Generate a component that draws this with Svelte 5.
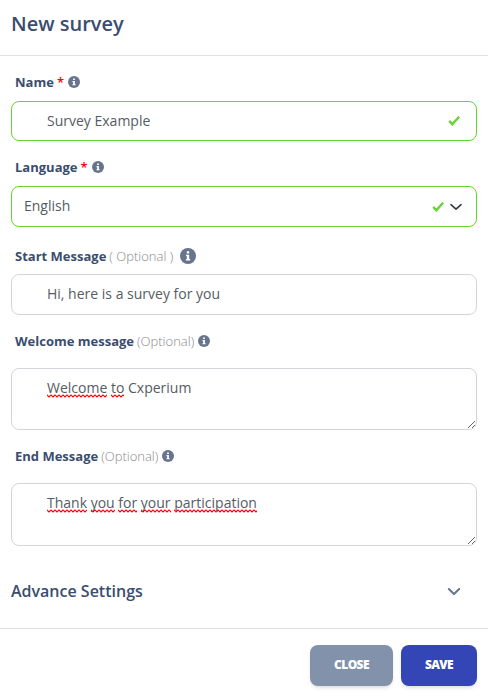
<script>
	let name = "Survey Example";
	let language = "English";
	let startMessage = "Hi, here is a survey for you";
	
	// words flagged by the spell checker are underlined
	let welcomeWords = [
		{text: "Welcome", flagged: true},
		{text: "to", flagged: true},
		{text: "Cxperium", flagged: false},
	];
	let endWords = ["Thank", "you", "for", "your", "participation"].map(
		text => ({text, flagged: true})
	);
	
	let advanced = false;
</script>

{#snippet info(size)}
	<svg class="info" width={size} height={size} viewBox="0 0 16 16">
		<circle cx="8" cy="8" r="8" />
		<path d="M6.8 3.2h2.4v2.2H6.8zM6 6.7h3.2v4.2h1v1.5H5.9v-1.5h1V8.2H6z" />
	</svg>
{/snippet}

{#snippet check()}
	<svg class="check" width="12" height="10" viewBox="0 0 12 10">
		<path d="M1.2 4.9L4.3 8.3L11.2 .7" />
	</svg>
{/snippet}

{#snippet words(list)}
	{#each list as word, i}{i > 0 ? " " : ""}<span class:flagged={word.flagged}>{word.text}</span>{/each}
{/snippet}

<div class="modal">
	<header>
		<h1>New survey</h1>
	</header>
	<main>
		<div class="label name">
			<b>Name</b><span class="required">*</span>{@render info(12)}
		</div>
		<div class="box valid">
			<input bind:value={name} spellcheck="false" />
			{@render check()}
		</div>
		
		<div class="label language">
			<b>Language</b><span class="required">*</span>{@render info(12)}
		</div>
		<div class="box valid select">
			<span class="value">{language}</span>
			{@render check()}
			<svg class="arrow" width="12" height="8" viewBox="0 0 12 8">
				<path d="M1 1.7L6 6.2L11 1.7" />
			</svg>
		</div>
		
		<div class="label start">
			<b>Start Message</b><span class="optional">( Optional )</span>{@render info(16)}
		</div>
		<div class="box message">
			<input bind:value={startMessage} spellcheck="false" />
		</div>
		
		<div class="label welcome">
			<b>Welcome message</b><span class="optional">(Optional)</span>{@render info(12)}
		</div>
		<div class="area">{@render words(welcomeWords)}</div>
		
		<div class="label end">
			<b>End Message</b><span class="optional">(Optional)</span>{@render info(12)}
		</div>
		<div class="area tall">{@render words(endWords)}</div>
		
		<button class="advance" on:click="{() => advanced = !advanced}">
			<span>Advance Settings</span>
			<svg class="arrow" width="14" height="9" viewBox="0 0 14 9">
				<path d="M1.8 2L7 7L12.2 2" />
			</svg>
		</button>
	</main>
	<footer>
		<button class="close">CLOSE</button>
		<button class="save">SAVE</button>
	</footer>
</div>

<style>
	:global(body) {
		background: #fff;
	}
	.modal, input, button {
		font-family: "Open Sans", sans-serif;
	}
	.modal {
		height: 691px;
		overflow: hidden;
		color: #3a4d6e;
	}
	.modal * {
		box-sizing: border-box;
	}
	svg {
		flex: none;
	}
	
	header {
		height: 56px;
		padding: 8px 11px 0;
		border-bottom: solid 1px #dee2e6;
	}
	h1 {
		margin: 0;
		font-size: 20px;
		line-height: 32px;
		font-weight: 600;
	}
	main {
		height: 572px;
		padding: 16px 11px 0;
	}
	
	.label {
		display: flex;
		align-items: center;
		height: 20px;
		margin-left: 4px;
		font-size: 13px;
		line-height: 20px;
		white-space: pre;
	}
	.label b {
		font-weight: 700;
	}
	.name {
		margin-bottom: 9px;
	}
	.language {
		margin-top: 16px;
		margin-bottom: 9px;
	}
	.start {
		margin-top: 19px;
		margin-bottom: 8px;
	}
	.welcome, .end {
		margin-top: 16px;
		margin-bottom: 17px;
	}
	.required {
		margin: 0 4px 0 3px;
		color: #f00;
		font-weight: 600;
	}
	.optional {
		margin: 0 4px 0 3px;
		font-weight: 300;
		color: #888;
	}
	.start .info {
		margin-left: 3px;
	}
	.info circle {
		fill: #67748e;
	}
	.info path {
		fill: #fff;
	}
	
	.box {
		display: flex;
		align-items: center;
		height: 40px;
		border: solid 1px #d2d6da;
		border-radius: 8px;
		color: #555c63;
		font-size: 14px;
	}
	.valid {
		border-color: #66d432;
	}
	.select, .message {
		height: 41px;
	}
	.select {
		padding: 0 14px 0 12px;
	}
	.value {
		flex-grow: 1;
		padding-bottom: 2px;
	}
	input {
		flex-grow: 1;
		min-width: 0;
		height: 100%;
		padding: 0 0 1px 35px;
		border: 0;
		outline: 0;
		background: none;
		font-size: 14px;
		color: inherit;
	}
	.message input {
		padding-bottom: 2px;
	}
	.box > .check {
		margin-right: 16px;
	}
	.select > .check {
		margin-right: 6px;
	}
	.check path {
		fill: none;
		stroke: #66d432;
		stroke-width: 2.4;
	}
	.arrow path {
		fill: none;
		stroke: #343a40;
		stroke-width: 1.6;
		stroke-linecap: round;
		stroke-linejoin: round;
	}
	
	.area {
		height: 62px;
		padding: 9px 12px 8px 35px;
		border: solid 1px #d2d6da;
		border-radius: 8px;
		overflow: auto;
		resize: vertical;
		color: #555c63;
		font-size: 14px;
		line-height: 20px;
	}
	.tall {
		height: 63px;
	}
	.flagged {
		padding-bottom: 2px;
		background: url("data:image/svg+xml,%3Csvg xmlns='http://www.w3.org/2000/svg' width='4' height='4'%3E%3Cpath d='M-2 3L0 1L2 3L4 1L6 3' fill='none' stroke='%23f00' stroke-width='1.2'/%3E%3C/svg%3E") 0 16px repeat-x;
	}
	
	.advance {
		display: flex;
		align-items: center;
		justify-content: space-between;
		width: 100%;
		height: 30px;
		margin-top: 30px;
		padding: 0 16px 0 0;
		border: 0;
		background: none;
		color: inherit;
		font-size: 16px;
		font-weight: 600;
		text-align: left;
	}
	.advance path {
		stroke: #67748e;
		stroke-width: 2;
	}
	
	footer {
		display: flex;
		justify-content: flex-end;
		gap: 8px;
		height: 63px;
		padding: 16px 11px 0;
		border-top: solid 1px #dee2e6;
	}
	footer button {
		width: 76px;
		height: 41px;
		padding: 0 0 2px;
		border: 0;
		border-radius: 8px;
		box-shadow: 0 3px 5px -1px #00000017, 0 2px 3px -1px #00000012;
		color: #fff;
		font-size: 12px;
		font-weight: 800;
		letter-spacing: -0.6px;
	}
	footer .close {
		width: 83px;
		background: #8392ab;
	}
	.save {
		background: #3446b5;
	}
</style>
